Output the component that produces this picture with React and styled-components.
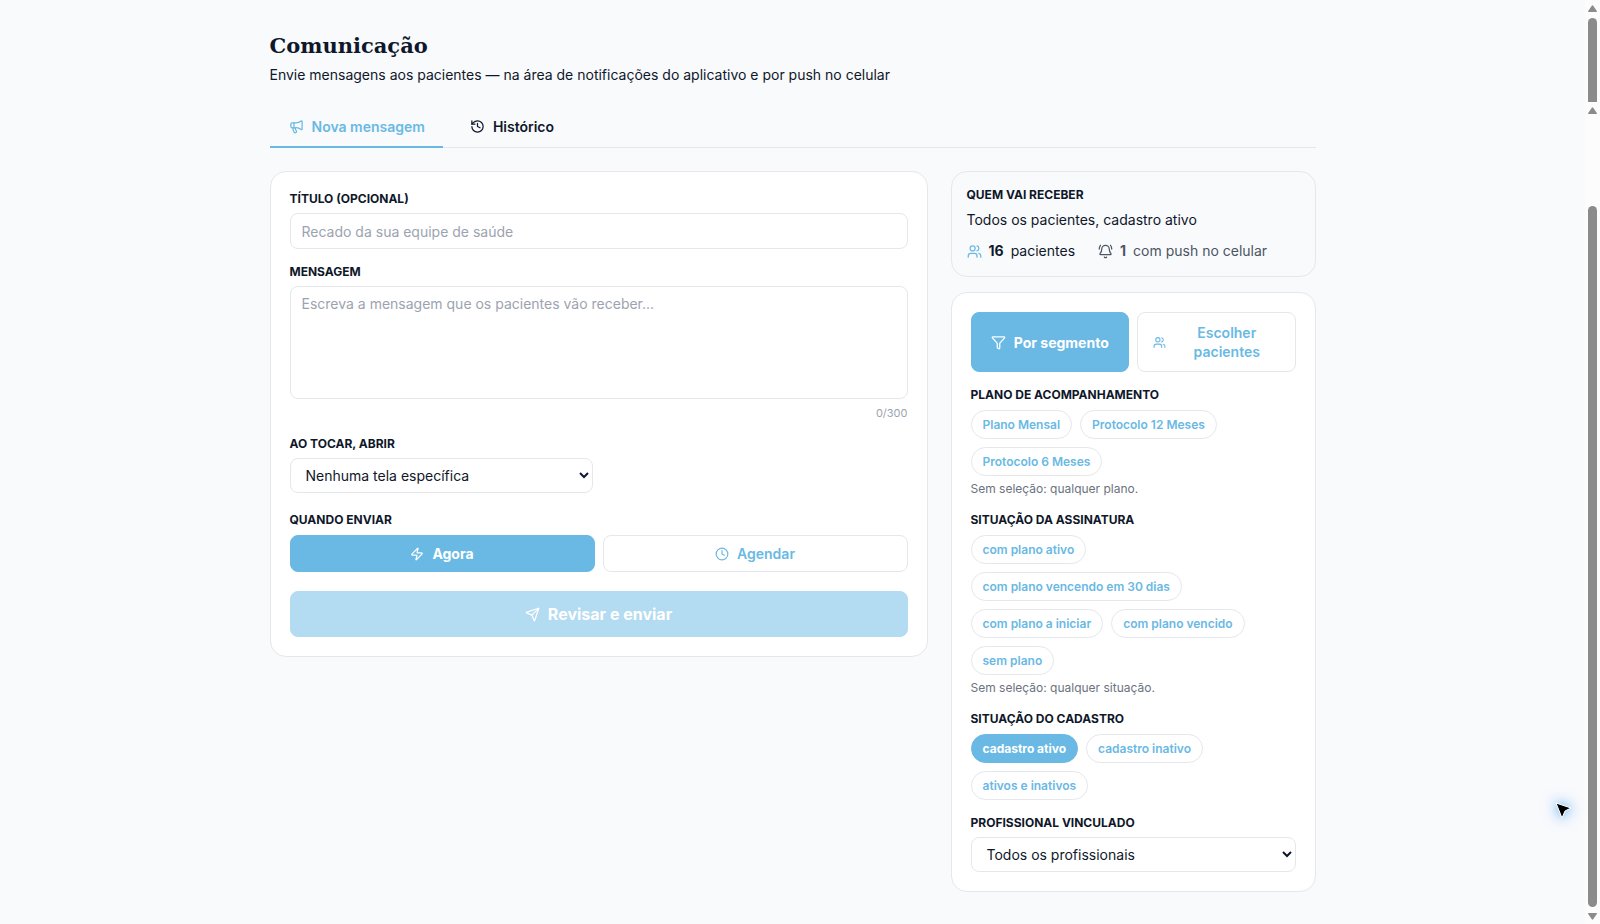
import React, { useState } from 'react'
import styled, { createGlobalStyle, ThemeProvider, css } from 'styled-components'
import { BellRing, Clock, Filter, History, Megaphone, Send, Users, Zap } from 'lucide-react'

const theme = {
  primary: '#69b9e4',
  text: '#0f172a',
  muted: '#6b7280',
  placeholder: '#9ca3af',
  border: '#e5e7eb',
  background: '#f9fafc',
  card: '#ffffff',
  scroll: '#8b8b8b',
}

const GlobalStyle = createGlobalStyle`
  * {
    box-sizing: border-box;
  }
  body {
    margin: 0;
    background: ${({ theme }) => theme.background};
    color: ${({ theme }) => theme.text};
    font-family: Inter, 'Liberation Sans', sans-serif;
    font-size: 14px;
    line-height: 20px;
  }
  button, input, select, textarea {
    font-family: inherit;
  }
`

const Shell = styled.div`
  display: flex;
  align-items: flex-start;
  min-height: 100vh;
`

const Main = styled.main`
  flex: 1;
  min-width: 0;
  padding: 32px 24px 24px;
`

const Content = styled.div`
  max-width: 1046px;
  margin: 0 auto;
`

const Title = styled.h1`
  margin: 0;
  font-family: 'DejaVu Serif', serif;
  font-size: 21px;
  line-height: 28px;
  font-weight: 700;
`

const Subtitle = styled.p`
  margin: 5px 0 20px;
`

const Tabs = styled.div`
  display: flex;
  gap: 8px;
  margin-bottom: 23px;
  border-bottom: 1px solid ${({ theme }) => theme.border};
`

const Tab = styled.button`
  display: flex;
  align-items: center;
  gap: 8px;
  height: 43px;
  padding: 2px 18px 0 19px;
  margin-bottom: -1px;
  border: 0;
  border-bottom: 2px solid ${({ theme, $active }) => ($active ? theme.primary : 'transparent')};
  background: none;
  color: ${({ theme, $active }) => ($active ? theme.primary : theme.text)};
  font-size: 14px;
  font-weight: 600;
  cursor: pointer;
`

const Columns = styled.div`
  display: grid;
  grid-template-columns: minmax(0, 1fr) 365px;
  gap: 23px;
  align-items: start;
  @media (max-width: 960px) {
    grid-template-columns: 1fr;
  }
`

const Stack = styled.div`
  display: flex;
  flex-direction: column;
  gap: 15px;
`

const Card = styled.section`
  display: flex;
  flex-direction: column;
  gap: ${({ $gap }) => $gap || 15}px;
  padding: 19px;
  border: 1px solid ${({ theme }) => theme.border};
  border-radius: 16px;
  background: ${({ theme }) => theme.card};
`

const Summary = styled(Card)`
  padding: 15px;
  background: ${({ theme }) => theme.background};
`

const Field = styled.div`
  display: flex;
  flex-direction: column;
`

const labelStyle = css`
  display: block;
  margin: 0;
  font-size: 12px;
  line-height: 16px;
  font-weight: 700;
  text-transform: uppercase;
`

const Label = styled.label`
  ${labelStyle}
  margin-bottom: 6px;
`

const GroupLabel = styled.h2`
  ${labelStyle}
  margin-bottom: ${({ $flush }) => ($flush ? 0 : '7px')};
`

const control = css`
  width: 100%;
  border: 1px solid ${({ theme }) => theme.border};
  border-radius: 8px;
  background: ${({ theme }) => theme.card};
  color: ${({ theme }) => theme.text};
  font-size: 14px;
  line-height: 20px;
  outline: none;
  &::placeholder {
    color: ${({ theme }) => theme.placeholder};
  }
`

const Input = styled.input`
  ${control}
  height: 36px;
  padding: 0 11px;
`

const Textarea = styled.textarea`
  ${control}
  display: block;
  height: 113px;
  padding: 7px 11px;
  resize: none;
`

const Select = styled.select`
  ${control}
  max-width: ${({ $narrow }) => ($narrow ? '303px' : 'none')};
  height: 35px;
  padding: 0 0 0 11px;
`

const Counter = styled.span`
  margin-top: 6px;
  align-self: flex-end;
  color: ${({ theme }) => theme.placeholder};
  font-size: 11px;
  line-height: 16px;
`

const Options = styled.div`
  display: grid;
  grid-template-columns: 1fr 1fr;
  gap: 8px;
`

const Button = styled.button`
  display: flex;
  align-items: center;
  justify-content: center;
  gap: 8px;
  min-height: ${({ $tall }) => ($tall ? '60px' : '37px')};
  padding: 8px 15px;
  border: 1px solid ${({ theme, $active }) => ($active ? theme.primary : theme.border)};
  border-radius: 8px;
  background: ${({ theme, $active }) => ($active ? theme.primary : theme.card)};
  color: ${({ theme, $active }) => ($active ? theme.card : theme.primary)};
  font-size: 14px;
  line-height: 19px;
  font-weight: ${({ $active }) => ($active ? 700 : 600)};
  cursor: pointer;
  svg {
    flex-shrink: 0;
  }
`

const Submit = styled(Button)`
  min-height: 46px;
  font-size: 16px;
  opacity: 0.5;
`

const Stats = styled.div`
  display: flex;
  flex-wrap: wrap;
  gap: 23px;
  margin-top: 4px;
`

const Stat = styled.span`
  display: flex;
  align-items: center;
  gap: 7px;
  color: ${({ theme, $muted }) => ($muted ? '#4b5563' : theme.text)};
  svg {
    color: ${({ theme, $muted }) => ($muted ? 'inherit' : theme.primary)};
  }
`

const Chips = styled.div`
  display: flex;
  flex-wrap: wrap;
  gap: 8px;
`

const Chip = styled.button`
  height: 29px;
  padding: 0 11px;
  border: 1px solid ${({ theme, $active }) => ($active ? theme.primary : theme.border)};
  border-radius: 15px;
  background: ${({ theme, $active }) => ($active ? theme.primary : theme.card)};
  color: ${({ theme, $active }) => ($active ? theme.card : theme.primary)};
  font-size: 12px;
  font-weight: ${({ $active }) => ($active ? 700 : 600)};
  cursor: pointer;
`

const Hint = styled.p`
  margin: 5px 0 0;
  color: ${({ theme }) => theme.muted};
  font-size: 12px;
  line-height: 16px;
`

const Rail = styled.div`
  position: sticky;
  top: 0;
  display: flex;
  flex-direction: column;
  width: 15px;
  height: 100vh;
`

const Track = styled.div`
  flex: ${({ $grow }) => ($grow ? '1' : '0 0 102px')};
  display: flex;
  flex-direction: column;
  align-items: center;
  gap: 6px;
  padding: ${({ $grow }) => ($grow ? '5px 0 4px' : '5px 0 0')};
  background: #fcfcfc;
`

const Thumb = styled.div`
  flex: 1;
  width: 9px;
  margin-top: ${({ $offset }) => $offset || 0}px;
  border-radius: ${({ $cut }) => ($cut ? '5px 5px 0 0' : '5px')};
  background: ${({ theme }) => theme.scroll};
`

const Pointer = styled.svg`
  position: fixed;
  right: 26px;
  bottom: 103px;
  filter: drop-shadow(0 0 5px #7dbcf8) drop-shadow(0 0 8px #a9d3fb);
`

const Arrow = ({ down }) => (
  <svg width="9" height="7" viewBox="0 0 9 7" fill={theme.scroll}>
    <path d={down ? 'M0 .8Q0 0 .8 0H8.2Q9 0 9 .8L5.2 6.3Q4.5 7 3.8 6.3Z' : 'M0 6.2Q0 7 .8 7H8.2Q9 7 9 6.2L5.2.7Q4.5 0 3.8.7Z'} />
  </svg>
)

const planos = ['Plano Mensal', 'Protocolo 12 Meses', 'Protocolo 6 Meses']
const assinaturas = [
  'com plano ativo',
  'com plano vencendo em 30 dias',
  'com plano a iniciar',
  'com plano vencido',
  'sem plano',
]
const cadastros = ['cadastro ativo', 'cadastro inativo', 'ativos e inativos']

const ChipGroup = ({ title, items, selected, onSelect, hint }) => (
  <Field>
    <GroupLabel>{title}</GroupLabel>
    <Chips>
      {items.map((item) => (
        <Chip key={item} type="button" $active={item === selected} onClick={() => onSelect(item)}>
          {item}
        </Chip>
      ))}
    </Chips>
    {hint && <Hint>{hint}</Hint>}
  </Field>
)

const App = () => {
  const [tab, setTab] = useState('nova')
  const [mensagem, setMensagem] = useState('')
  const [quando, setQuando] = useState('agora')
  const [modo, setModo] = useState('segmento')
  const [plano, setPlano] = useState(null)
  const [assinatura, setAssinatura] = useState(null)
  const [cadastro, setCadastro] = useState('cadastro ativo')

  return (
    <ThemeProvider theme={theme}>
      <GlobalStyle />
      <Shell>
        <Main>
          <Content>
            <Title>Comunicação</Title>
            <Subtitle>Envie mensagens aos pacientes — na área de notificações do aplicativo e por push no celular</Subtitle>
            <Tabs>
              <Tab type="button" $active={tab === 'nova'} onClick={() => setTab('nova')}>
                <Megaphone size={15} />
                Nova mensagem
              </Tab>
              <Tab type="button" $active={tab === 'historico'} onClick={() => setTab('historico')}>
                <History size={15} />
                Histórico
              </Tab>
            </Tabs>
            <Columns>
              <Card $gap={19}>
                <Stack>
                  <Field>
                    <Label htmlFor="titulo">Título (opcional)</Label>
                    <Input id="titulo" placeholder="Recado da sua equipe de saúde" />
                  </Field>
                  <Field>
                    <Label htmlFor="mensagem">Mensagem</Label>
                    <Textarea
                      id="mensagem"
                      maxLength={300}
                      value={mensagem}
                      onChange={(e) => setMensagem(e.target.value)}
                      placeholder="Escreva a mensagem que os pacientes vão receber..."
                    />
                    <Counter>{mensagem.length}/300</Counter>
                  </Field>
                  <Field>
                    <Label htmlFor="tela">Ao tocar, abrir</Label>
                    <Select id="tela" $narrow>
                      <option>Nenhuma tela específica</option>
                    </Select>
                  </Field>
                </Stack>
                <Field>
                  <GroupLabel>Quando enviar</GroupLabel>
                  <Options>
                    <Button type="button" $active={quando === 'agora'} onClick={() => setQuando('agora')}>
                      <Zap size={14} />
                      Agora
                    </Button>
                    <Button type="button" $active={quando === 'agendar'} onClick={() => setQuando('agendar')}>
                      <Clock size={14} />
                      Agendar
                    </Button>
                  </Options>
                </Field>
                <Submit type="button" $active disabled={!mensagem}>
                  <Send size={15} />
                  Revisar e enviar
                </Submit>
              </Card>
              <Stack>
                <Summary $gap={7}>
                  <GroupLabel $flush>Quem vai receber</GroupLabel>
                  <span>Todos os pacientes, cadastro ativo</span>
                  <Stats>
                    <Stat>
                      <Users size={15} />
                      <strong>16</strong> pacientes
                    </Stat>
                    <Stat $muted>
                      <BellRing size={15} />
                      <strong>1</strong> com push no celular
                    </Stat>
                  </Stats>
                </Summary>
                <Card>
                  <Options>
                    <Button type="button" $tall $active={modo === 'segmento'} onClick={() => setModo('segmento')}>
                      <Filter size={15} />
                      Por segmento
                    </Button>
                    <Button type="button" $tall $active={modo === 'escolher'} onClick={() => setModo('escolher')}>
                      <Users size={13} />
                      Escolher pacientes
                    </Button>
                  </Options>
                  <ChipGroup
                    title="Plano de acompanhamento"
                    items={planos}
                    selected={plano}
                    onSelect={setPlano}
                    hint="Sem seleção: qualquer plano."
                  />
                  <ChipGroup
                    title="Situação da assinatura"
                    items={assinaturas}
                    selected={assinatura}
                    onSelect={setAssinatura}
                    hint="Sem seleção: qualquer situação."
                  />
                  <ChipGroup title="Situação do cadastro" items={cadastros} selected={cadastro} onSelect={setCadastro} />
                  <Field>
                    <Label htmlFor="profissional">Profissional vinculado</Label>
                    <Select id="profissional">
                      <option>Todos os profissionais</option>
                    </Select>
                  </Field>
                </Card>
              </Stack>
            </Columns>
          </Content>
        </Main>
        <Rail aria-hidden="true">
          <Track>
            <Arrow />
            <Thumb $cut />
          </Track>
          <Track $grow>
            <Arrow />
            <Thumb $offset={86} />
            <Arrow down />
          </Track>
        </Rail>
      </Shell>
      <Pointer width="20" height="20" viewBox="0 0 20 20" aria-hidden="true">
        <path d="M2 2L17 7L11 10L8 17Z" fill="#000" stroke="#fff" strokeWidth="1" strokeLinejoin="round" />
      </Pointer>
    </ThemeProvider>
  )
}

export default App
